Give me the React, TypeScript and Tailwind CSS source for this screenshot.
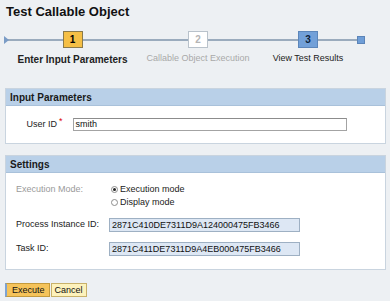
import React from 'react';

const font = { fontFamily: '"Liberation Sans", Arial, sans-serif' };

const Roadmap: React.FC = () => (
  <div className="relative h-[52px] mt-[11px]">
    {/* connecting line */}
    <div className="absolute left-[6px] right-[30px] top-[8px] h-[2px] bg-[#9aabbd]" />
    <div className="absolute left-[4px] top-[5px] w-0 h-0 border-y-[4px] border-y-transparent border-l-[5px] border-l-[#7a9cc6]" />
    <div className="absolute left-[357px] top-[5px] w-[8px] h-[8px] bg-[#6f9ed7] border border-[#5b84b8]" />
    <div className="relative flex pl-[10px]">
      <div className="w-[125px] flex flex-col items-center">
        <div className="w-[20px] h-[17px] bg-[#f5bf45] border border-[#8b7a4a] flex items-center justify-center text-[10px] font-bold text-black">1</div>
        <div className="mt-[4px] text-[10px] font-bold text-[#222] whitespace-nowrap">Enter Input Parameters</div>
      </div>
      <div className="w-[126px] flex flex-col items-center">
        <div className="w-[20px] h-[17px] bg-white border border-[#b9c2cb] flex items-center justify-center text-[10px] font-bold text-[#b5b5b5]">2</div>
        <div className="mt-[4px] text-[9px] text-[#a9a9a9] whitespace-nowrap">Callable Object Execution</div>
      </div>
      <div className="w-[94px] flex flex-col items-center">
        <div className="w-[20px] h-[17px] bg-[#72a0d8] border border-[#5c86ba] flex items-center justify-center text-[10px] font-bold text-[#0d1f3a]">3</div>
        <div className="mt-[4px] text-[9px] text-[#222] whitespace-nowrap">View Test Results</div>
      </div>
    </div>
  </div>
);

const Panel: React.FC<{ title: string; children: React.ReactNode; className?: string }> = ({ title, children, className }) => (
  <div className={`mx-[5px] w-[381px] border border-[#c9d4df] ${className ?? ''}`}>
    <div className="h-[17px] bg-[#b9d0e8] border-b border-[#a9c1da] px-[4px] flex items-center text-[10px] font-bold text-[#1a1a1a]">{title}</div>
    <div className="bg-white">{children}</div>
  </div>
);

const Radio: React.FC<{ checked?: boolean; label: string }> = ({ checked, label }) => (
  <div className="flex items-center h-[13px]">
    <span className="w-[7px] h-[7px] rounded-full border border-[#8d8d8d] bg-white flex items-center justify-center mr-[2px]">
      {checked && <span className="w-[3px] h-[3px] rounded-full bg-[#222]" />}
    </span>
    <span className="text-[9px] text-[#222]">{label}</span>
  </div>
);

export default function App() {
  return (
    <div className="w-[390px] h-[301px] bg-[#edf0f3] overflow-hidden" style={font}>
      <h1 className="pl-[6px] pt-[4px] text-[13px] leading-[16px] font-bold text-[#111]">Test Callable Object</h1>

      <Roadmap />

      <Panel title="Input Parameters" className="mt-[5px]">
        <div className="h-[37px] flex items-center">
          <div className="w-[51px] text-right text-[9px] text-[#222]">User ID</div>
          <span className="text-[#d00] text-[9px] self-start mt-[9px] ml-[2px]">*</span>
          <div className="ml-[10px] w-[274px] h-[13px] border border-[#a3a3a3] border-t-[#8c8c8c] bg-white px-[2px] text-[9px] leading-[11px] text-[#111]">smith</div>
        </div>
      </Panel>

      <Panel title="Settings" className="mt-[11px]">
        <div className="h-[96px] pt-[10px] pl-[10px] text-[9px]">
          <div className="flex">
            <div className="w-[95px] text-[#9a9a9a] leading-[13px]">Execution Mode:</div>
            <div className="flex flex-col">
              <Radio checked label="Execution mode" />
              <Radio label="Display mode" />
            </div>
          </div>
          <div className="flex items-center mt-[9px]">
            <div className="w-[93px] text-[#222]">Process Instance ID:</div>
            <div className="w-[191px] h-[14px] bg-[#dde7f4] border border-[#9eb0c3] px-[2px] leading-[12px] text-[#111]">2871C410DE7311D9A124000475FB3466</div>
          </div>
          <div className="flex items-center mt-[10px]">
            <div className="w-[93px] text-[#222]">Task ID:</div>
            <div className="w-[191px] h-[14px] bg-[#dde7f4] border border-[#9eb0c3] px-[2px] leading-[12px] text-[#111]">2871C411DE7311D9A4EB000475FB3466</div>
          </div>
        </div>
      </Panel>

      <div className="flex mt-[13px] ml-[5px] text-[9px]">
        <button className="h-[14px] pl-[5px] pr-[4px] bg-[#f5c35a] border border-[#c49a3c] border-l-[2px] border-l-[#7ea3d3] text-[#111] leading-[12px]">Execute</button>
        <button className="h-[14px] ml-[1px] px-[3px] bg-[#fdf2bc] border border-[#c8b16a] text-[#111] leading-[12px]">Cancel</button>
      </div>
    </div>
  );
}
